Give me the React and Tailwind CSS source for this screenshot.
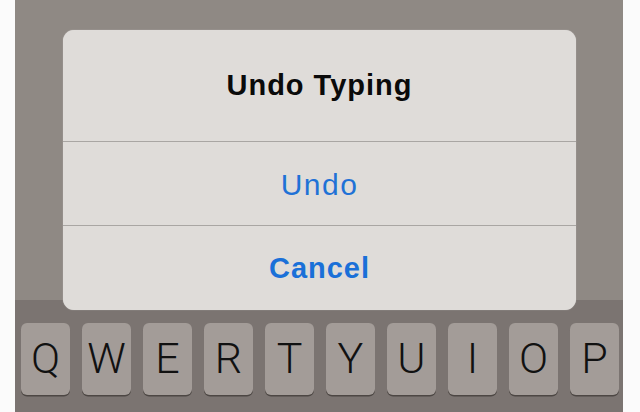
import React from "react";

const keys = ["Q", "W", "E", "R", "T", "Y", "U", "I", "O", "P"];

export default function App() {
  return (
    <div className="relative flex h-[412px] w-[640px] overflow-hidden bg-white">
      <div className="w-[15px] shrink-0 bg-[#fbfbfb]" />
      <div className="flex w-[608px] shrink-0 flex-col">
        <div className="h-[300px] bg-[#8f8984]" />
        <div className="flex h-[112px] gap-[12px] bg-[#7b7471] pl-[6px] pt-[23px]">
          {keys.map((k) => (
            <div
              key={k}
              className="flex h-[72px] w-[49px] items-center justify-center rounded-[6px] bg-[#a39c98] pb-[1px] text-[43px] font-light leading-none text-[#111] shadow-[0_1.5px_0_#4d4744]"
              style={{ fontFamily: "'Helvetica Neue', Roboto, 'Liberation Sans', sans-serif" }}
            >
              {k}
            </div>
          ))}
        </div>
      </div>
      <div className="flex-1 bg-[#fbfbfb]" />

      <div
        className="absolute left-[63px] top-[30px] flex h-[280px] w-[513px] flex-col overflow-hidden rounded-[11px] bg-[#dfdcd9] shadow-[0_0_1px_rgba(255,255,255,0.6)]"
        style={{ fontFamily: "'Liberation Sans', Arial, sans-serif" }}
      >
        <div className="flex h-[111px] items-center justify-center pt-[1px] text-[29px] font-bold tracking-[1px] text-[#0a0a0a]">
          Undo Typing
        </div>
        <div className="h-px bg-[#a9a6a3]" />
        <div className="flex h-[83px] items-center justify-center pt-[2px] text-[30px] tracking-[1.5px] text-[#1f72d6]">
          Undo
        </div>
        <div className="h-px bg-[#a9a6a3]" />
        <div className="flex flex-1 items-center justify-center pt-[1px] text-[29px] font-bold tracking-[1px] text-[#1a70d8]">
          Cancel
        </div>
      </div>
    </div>
  );
}
